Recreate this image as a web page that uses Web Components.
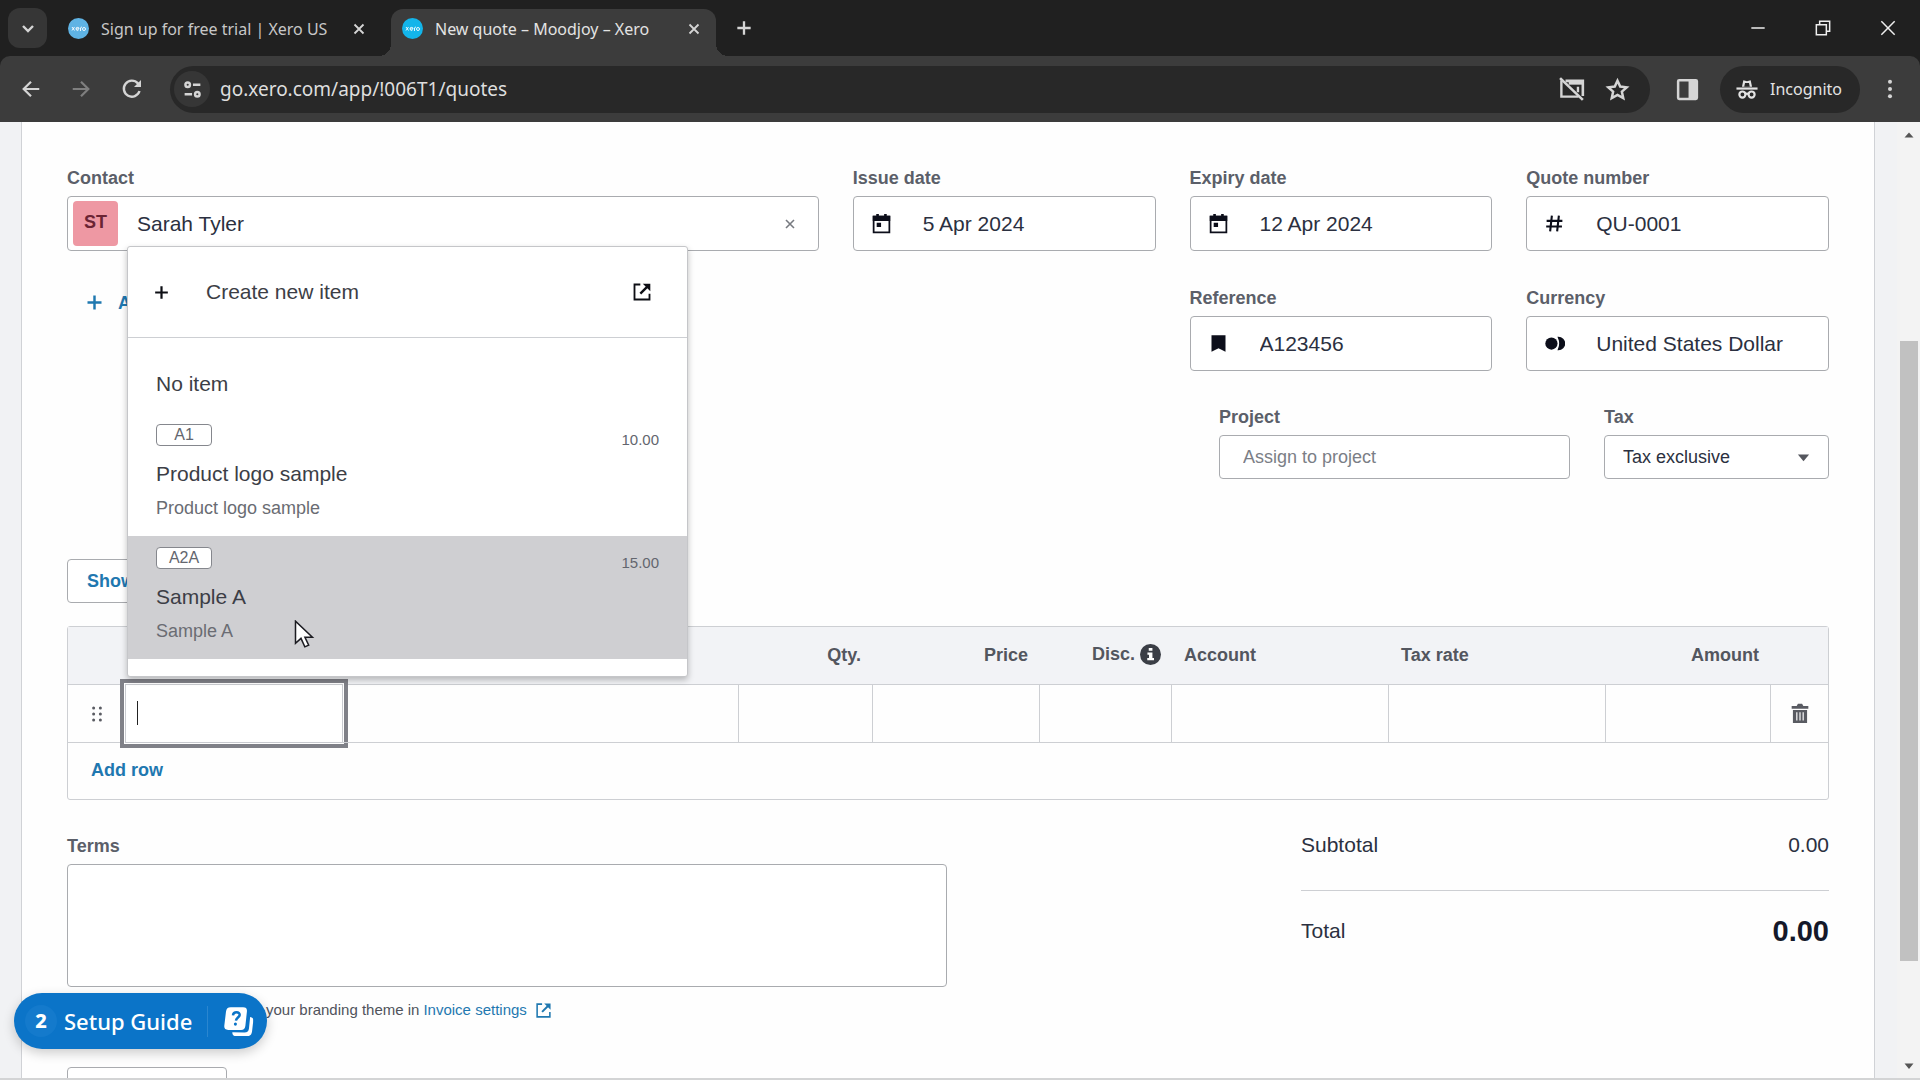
<!DOCTYPE html>
<html lang="en">
<head>
<meta charset="utf-8">
<title>New quote – Moodjoy – Xero</title>
<style>
    html, body {
        margin: 0;
        height: 100%;
        overflow: hidden;
    }

    body {
        display: flex;
        flex-direction: column;
        font-family: "Liberation Sans", Arial, sans-serif;
        font-size: 18px;
        line-height: 20px;
        color: #2b3040;
        background: #f1f2f4;
        --label: #5b5f69;
        --line: #cdcfd3;
        --field-line: #a9abaf;
        --blue: #1f78b0;
        --text: #2b3040;
    }
</style>
</head>
<body>
<browser-bar>
    <browser-tab slot="tabs" label="Sign up for free trial | Xero US"></browser-tab>
    <browser-tab slot="tabs" label="New quote – Moodjoy – Xero" active></browser-tab>
</browser-bar>
<page-view>
    <quote-form></quote-form>
    <setup-guide slot="floating" count="2"></setup-guide>
</page-view>

<script>
const ICONS = {
    chevron: '<path d="M7 10l5 5 5-5" fill="none" stroke="currentColor" stroke-width="2.4"/>',
    close: '<path d="M6 6l12 12M18 6L6 18" stroke="currentColor" stroke-width="2.4"/>',
    thinClose: '<path d="M4 4l16 16M20 4L4 20" stroke="currentColor" stroke-width="1.8"/>',
    plus: '<path d="M12 4v16M4 12h16" stroke="currentColor" stroke-width="2.8"/>',
    minimize: '<path d="M4 12h16" stroke="currentColor" stroke-width="1.8"/>',
    restore: '<path d="M4 8h12v12H4zM8 8V4h12v12h-4" fill="none" stroke="currentColor" stroke-width="1.8"/>',
    back: '<path d="M21 12H4M12 4l-8 8 8 8" fill="none" stroke="currentColor" stroke-width="2.4"/>',
    forward: '<path d="M3 12h17M12 4l8 8-8 8" fill="none" stroke="currentColor" stroke-width="2.4"/>',
    reload: '<path d="M19.5 14a8 8 0 1 1-1.6-7.6L20 8.6" fill="none" stroke="currentColor" stroke-width="2.4"/><path d="M21 3v7h-7z" fill="currentColor"/>',
    tune: '<g fill="none" stroke="currentColor" stroke-width="2.8"><circle cx="6.5" cy="6.500" r="2.6"/><path d="M12.500 6.500h8.500M3 17.500h8.500"/><circle cx="17.500" cy="17.500" r="2.6"/></g>',
    cameraOff: '<path d="M6 4.500h16v14" fill="none" stroke="currentColor" stroke-width="2.4"/><path d="M9 4h13v4H9z" fill="currentColor"/><path d="M2.200 4v15H18M17.500 10v5" fill="none" stroke="currentColor" stroke-width="2.200"/><path d="M1 2l21 20" stroke="currentColor" stroke-width="2.400"/>',
    star: '<path d="M12 3.500l2.600 5.700 6.200.700-4.600 4.200 1.300 6.100-5.500-3.100-5.500 3.100 1.300-6.100L3.200 9.900l6.200-.700z" fill="none" stroke="currentColor" stroke-width="2.4"/>',
    panel: '<rect x="3" y="3" width="18" height="18" rx="1" fill="none" stroke="currentColor" stroke-width="2.4"/><path d="M13 3h8v18h-8z" fill="currentColor"/>',
    incognito: '<path d="M6.500 9.500L8 2.500l4 1 4-1 1.500 7z" fill="currentColor"/><path d="M9.800 5.500h4.400l.800 4H9z" fill="#282828"/><path d="M.500 11.500h23" stroke="currentColor" stroke-width="2.400"/><g fill="none" stroke="currentColor" stroke-width="2.400"><circle cx="7" cy="18" r="3.300"/><circle cx="17" cy="18" r="3.300"/><path d="M10.300 17.500q1.700-1 3.400 0"/></g>',
    more: '<g fill="currentColor"><circle cx="12" cy="4" r="2.200"/><circle cx="12" cy="12" r="2.200"/><circle cx="12" cy="20" r="2.200"/></g>',
    calendar: '<path d="M3 4h18v18H3z" fill="none" stroke="currentColor" stroke-width="2"/><path d="M2 3h20v6H2zM6 1h3v4H6zM15 1h3v4h-3zM6.500 11h5v5h-5z" fill="currentColor"/>',
    hash: '<path d="M9 3L7 21M17 3l-2 18M3 9h18M2.500 15.500h18" stroke="currentColor" stroke-width="2.400"/>',
    bookmark: '<path d="M4 2.500h16v19l-8-4-8 4z" fill="currentColor"/>',
    coins: '<circle cx="8.500" cy="12" r="7" fill="currentColor"/><path d="M16.500 5a7 7 0 0 1 0 14q3.200-7 0-14z" fill="currentColor" stroke="currentColor" stroke-width="1.500"/>',
    external: '<path d="M10 3H3v18h18v-7" fill="none" stroke="currentColor" stroke-width="2.200"/><path d="M10 14L19 5" stroke="currentColor" stroke-width="2.800"/><path d="M13 2h9v9z" fill="currentColor"/>',
    grip: '<g fill="currentColor"><circle cx="7.500" cy="4" r="2"/><circle cx="7.500" cy="12" r="2"/><circle cx="7.500" cy="20" r="2"/><circle cx="16.500" cy="4" r="2"/><circle cx="16.500" cy="12" r="2"/><circle cx="16.500" cy="20" r="2"/></g>',
    trash: '<path d="M2 3.500h6L9.500 1h5L16 3.500h6V7H2zM3.500 8.500h17V24h-17z" fill="currentColor"/><path d="M8.200 11v10M12 11v10M15.800 11v10" stroke="#fff" stroke-width="1.400"/>',
    info: '<circle cx="12" cy="12" r="12" fill="#3b3e46"/><path d="M10 4.500h4.200v3.300H10zM8.500 9.700h5.700V16H16v2.500H8.300V16h2v-3.800H8.500z" fill="#fff"/>',
    caretDown: '<path d="M3 7h18l-9 11z" fill="currentColor"/>',
    caretUp: '<path d="M3 17h18L12 7z" fill="currentColor"/>',
    pointer: '<path d="M3 1v19l4.700-4.300L11 23l3.300-1.500-3.200-6.700h6.400z" fill="#fff" stroke="#1c1c22" stroke-width="1.300"/>',
    cards: '<path d="M21 8.500c2.500.500 2.500 1.500 2.300 4l-.800 7c-.400 2.800-1.500 3.800-4 3.800h-8c-2.500 0-3.300-1-3.300-3l9.300.200c2.500 0 3.300-1 3.600-3z" fill="currentColor"/><path d="M6 1h9.500c2.500 0 3.300 1.200 3 3.500l-1.200 11c-.300 2-1.300 3-3.300 3H4c-2.300 0-3.200-1.200-3-3.300L2.300 4.500C2.600 2.100 3.700 1 6 1z" fill="currentColor"/><path d="M7.700 7.200c.200-1.600 1.300-2.400 2.800-2.400 1.700 0 2.500 1 2.400 2.200-.300 1.900-2.600 2-2.900 4.300" fill="none" stroke="#0b74c8" stroke-width="1.900"/><circle cx="9.600" cy="14" r="1.200" fill="#0b74c8"/>'
};

class UiIcon extends HTMLElement {
    constructor() {
        super();
        this.attachShadow({ mode: 'open' });
    }

    connectedCallback() {
        const size = this.getAttribute('size') || 20;
        this.shadowRoot.innerHTML = `
        <style>
            :host { display: inline-flex; flex: none; vertical-align: middle; }
            svg { display: block; }
        </style>
        <svg width="${size}" height="${size}" viewBox="0 0 24 24" aria-hidden="true">${ICONS[this.getAttribute('name')] || ''}</svg>
        `;
    }
}

class BrowserTab extends HTMLElement {
    constructor() {
        super();
        this.attachShadow({ mode: 'open' });
    }

    connectedCallback() {
        const label = this.getAttribute('label');
        this.shadowRoot.innerHTML = `
        <style>
            :host {
                position: relative;
                display: flex;
                align-items: center;
                gap: 12px;
                width: 334px;
                height: 47px;
                padding: 0 23px 8px 11px;
                margin-top: 9px;
                box-sizing: border-box;
                color: #c7c7c7;
            }

            :host([active]) {
                width: 325px;
                padding-right: 13px;
                border-radius: 12px 12px 0 0;
                background: #3c3c3c;
                color: #e3e3e3;
            }

            /* curved feet of the selected tab */
            :host([active])::before,
            :host([active])::after {
                content: "";
                position: absolute;
                bottom: 0;
                width: 12px;
                height: 12px;
            }

            :host([active])::before {
                left: -12px;
                background: radial-gradient(circle at 0 0, transparent 12px, #3c3c3c 12px);
            }

            :host([active])::after {
                right: -12px;
                background: radial-gradient(circle at 100% 0, transparent 12px, #3c3c3c 12px);
            }

            .favicon {
                flex: none;
                width: 21px;
                height: 21px;
                border-radius: 50%;
                background: #5fb3e4;
            }

            :host([active]) .favicon { background: #13b5ea; }

            .label {
                flex: 1;
                font-size: 16px;
                white-space: nowrap;
            }

            button {
                display: flex;
                padding: 0;
                border: 0;
                background: none;
                color: #d5d5d5;
            }
        </style>
        <svg class="favicon" viewBox="0 0 21 21" aria-hidden="true">
            <path d="M4 9l2.500 3.500M6.500 9L4 12.500M8 11h3a1.500 1.500 0 1 0-.500 1M12.500 13v-3q.500-1 1.500-1" fill="none" stroke="#fff" stroke-width=".9"/>
            <circle cx="16" cy="11" r="1.500" fill="none" stroke="#fff" stroke-width=".9"/>
        </svg>
        <span class="label">${label}</span>
        <button aria-label="Close tab"><ui-icon name="close" size="18"></ui-icon></button>
        `;
    }
}

class BrowserBar extends HTMLElement {
    constructor() {
        super();
        this.attachShadow({ mode: 'open' });
        this.shadowRoot.innerHTML = `
        <style>
            :host {
                display: block;
                flex: none;
                background: #202020;
                color: #d5d5d5;
                font-family: "Noto Sans", "Open Sans", sans-serif;
            }

            button {
                display: flex;
                align-items: center;
                justify-content: center;
                padding: 0;
                border: 0;
                background: none;
                color: inherit;
                font: inherit;
            }

            .strip {
                display: flex;
                height: 56px;
                padding: 0 22px 0 8px;
            }

            .tabs {
                display: flex;
                flex: 1;
                padding-left: 10px;
            }

            .search {
                width: 39px;
                height: 40px;
                margin-top: 8px;
                border-radius: 12px;
                background: #363636;
            }

            .new-tab {
                width: 30px;
                margin-left: 13px;
            }

            .window {
                display: flex;
                gap: 45px;
                color: #eee;
            }

            .toolbar {
                display: flex;
                align-items: center;
                height: 66px;
                padding: 0 19px 0 18px;
                background: #3c3c3c;
                border-radius: 10px 10px 0 0;
            }

            .nav {
                display: flex;
                gap: 28px;
                padding-left: 2px;
                padding-right: 26px;
            }

            .nav .off { color: #7f7f7f; }

            .address {
                display: flex;
                flex: 1;
                align-items: center;
                gap: 20px;
                height: 47px;
                padding: 0 20px 0 4px;
                border-radius: 24px;
                background: #282828;
            }

            .site {
                width: 36px;
                height: 36px;
                border-radius: 50%;
                background: #363636;
            }

            input {
                flex: 1;
                min-width: 0;
                height: 32px;
                padding: 0;
                margin-left: -10px;
                border: 0;
                outline: 0;
                background: none;
                color: #dedede;
                font: inherit;
                font-size: 19px;
            }

            .panel { margin: 0 20px 0 25px; }

            .incognito {
                gap: 12px;
                height: 47px;
                padding: 0 18px 0 16px;
                margin-right: 19px;
                border-radius: 24px;
                background: #282828;
                color: #e3e3e3;
                font-size: 16px;
            }
        </style>
        <div class="strip">
            <button class="search" aria-label="Search tabs"><ui-icon name="chevron" size="24"></ui-icon></button>
            <div class="tabs">
                <slot name="tabs"></slot>
                <button class="new-tab" aria-label="New tab"><ui-icon name="plus" size="20"></ui-icon></button>
            </div>
            <div class="window">
                <button aria-label="Minimize"><ui-icon name="minimize" size="20"></ui-icon></button>
                <button aria-label="Restore"><ui-icon name="restore" size="20"></ui-icon></button>
                <button aria-label="Close"><ui-icon name="thinClose" size="20"></ui-icon></button>
            </div>
        </div>
        <div class="toolbar">
            <div class="nav">
                <button aria-label="Back"><ui-icon name="back" size="22"></ui-icon></button>
                <button class="off" aria-label="Forward"><ui-icon name="forward" size="22"></ui-icon></button>
                <button aria-label="Reload"><ui-icon name="reload" size="24"></ui-icon></button>
            </div>
            <div class="address">
                <button class="site" aria-label="View site information"><ui-icon name="tune" size="21"></ui-icon></button>
                <input aria-label="Address" value="go.xero.com/app/!006T1/quotes">
                <button aria-label="Camera blocked"><ui-icon name="cameraOff" size="26"></ui-icon></button>
                <button aria-label="Bookmark this page"><ui-icon name="star" size="25"></ui-icon></button>
            </div>
            <button class="panel" aria-label="Side panel"><ui-icon name="panel" size="25"></ui-icon></button>
            <button class="incognito"><ui-icon name="incognito" size="22"></ui-icon>Incognito</button>
            <button aria-label="Menu"><ui-icon name="more" size="22"></ui-icon></button>
        </div>
        `;
    }
}

class PageView extends HTMLElement {
    constructor() {
        super();
        this.attachShadow({ mode: 'open' });
        this.shadowRoot.innerHTML = `
        <style>
            :host {
                position: relative;
                display: flex;
                flex: 1;
                min-height: 0;
                padding-left: 21px;
                overflow: hidden;
            }

            main {
                flex: 1;
                margin-right: 22px;
                border: 1px solid #d0d2d6;
                border-width: 0 1px;
                background: #fefefe;
            }

            .scrollbar {
                display: flex;
                flex-direction: column;
                align-items: center;
                width: 23px;
                padding: 7px 0 8px;
                box-sizing: border-box;
                background: #f3f3f3;
                color: #555;
            }

            .track {
                display: flex;
                flex: 1;
                flex-direction: column;
                margin: 4px 0;
            }

            .before { flex: 196; }

            .thumb {
                flex: 621;
                width: 18px;
                background: #c1c1c1;
            }

            .after { flex: 95; }

            .edge {
                position: absolute;
                left: 0;
                right: 0;
                bottom: 0;
                height: 2px;
                background: #d3d4d5;
            }
        </style>
        <main><slot></slot></main>
        <div class="scrollbar">
            <ui-icon name="caretUp" size="12"></ui-icon>
            <div class="track"><div class="before"></div><div class="thumb"></div><div class="after"></div></div>
            <ui-icon name="caretDown" size="12"></ui-icon>
        </div>
        <div class="edge"></div>
        <slot name="floating"></slot>
        `;
    }
}

// Labelled text box, with an icon or a slotted lead at its left
class QuoteField extends HTMLElement {
    constructor() {
        super();
        this.attachShadow({ mode: 'open' });
    }

    connectedCallback() {
        const icon = this.getAttribute('icon');
        const clear = this.hasAttribute('clearable')
            ? '<button aria-label="Clear"><ui-icon name="close" size="16"></ui-icon></button>'
            : '';

        this.shadowRoot.innerHTML = `
        <style>
            :host { display: block; }

            label {
                display: block;
                margin-bottom: 8px;
                color: var(--label);
                font-weight: bold;
            }

            .box {
                display: flex;
                align-items: center;
                height: 55px;
                padding: 0 5px;
                box-sizing: border-box;
                border: 1px solid var(--field-line);
                border-radius: 4px;
                background: #fff;
            }

            .lead {
                display: flex;
                justify-content: center;
                width: 45px;
                margin-right: 19px;
                color: #0c0e1a;
            }

            input {
                flex: 1;
                min-width: 0;
                padding: 0;
                border: 0;
                outline: 0;
                background: none;
                color: var(--text);
                font: inherit;
                font-size: 21px;
            }

            input::placeholder { color: #7b7e86; }

            button {
                display: flex;
                padding: 0 15px;
                border: 0;
                background: none;
                color: #777a80;
            }

            :host([compact]) .box {
                height: 44px;
                padding: 0 23px;
            }

            :host([compact]) .lead { display: none; }
            :host([compact]) input { font-size: 18px; }
        </style>
        <label for="field">${this.getAttribute('label')}</label>
        <div class="box">
            <div class="lead"><slot name="lead">${icon ? `<ui-icon name="${icon}" size="21"></ui-icon>` : ''}</slot></div>
            <input id="field" value="${this.getAttribute('value') || ''}" placeholder="${this.getAttribute('placeholder') || ''}">
            ${clear}
        </div>
        `;
    }
}

class ItemOption extends HTMLElement {
    constructor() {
        super();
        this.attachShadow({ mode: 'open' });
    }

    connectedCallback() {
        this.shadowRoot.innerHTML = `
        <style>
            :host {
                position: relative;
                display: grid;
                grid-template-columns: 1fr auto;
                height: 123px;
                padding: 11px 28px 0;
                box-sizing: border-box;
                align-content: start;
            }

            :host([selected]) { background: #cfcfd2; }

            .code {
                justify-self: start;
                width: 56px;
                height: 22px;
                box-sizing: border-box;
                border: 1px solid #85878d;
                border-radius: 4px;
                background: #fff;
                color: #63666e;
                font-size: 16px;
                line-height: 20px;
                text-align: center;
            }

            .price {
                padding-top: 6px;
                color: #63666e;
                font-size: 15px;
            }

            .name, .description { grid-column: 1 / -1; }

            .name {
                margin-top: 6px;
                font-size: 21px;
                line-height: 36px;
            }

            .description {
                color: #6a6c73;
                line-height: 32px;
            }

            ::slotted(*) {
                position: absolute;
                left: 164px;
                top: 84px;
            }
        </style>
        <span class="code">${this.getAttribute('code')}</span>
        <span class="price">${this.getAttribute('price')}</span>
        <span class="name">${this.getAttribute('name')}</span>
        <span class="description">${this.getAttribute('description')}</span>
        <slot></slot>
        `;
    }
}

class ItemPicker extends HTMLElement {
    constructor() {
        super();
        this.attachShadow({ mode: 'open' });
        this.shadowRoot.innerHTML = `
        <style>
            :host {
                display: block;
                width: 561px;
                border: 1px solid #c5c6c9;
                border-radius: 3px;
                box-sizing: border-box;
                background: #fff;
                box-shadow: 0 3px 6px rgba(0, 0, 0, .25);
                font-weight: normal;
                color: #3c3e46;
            }

            .create {
                display: flex;
                align-items: center;
                width: 100%;
                height: 91px;
                padding: 0 35px 0 24px;
                border: 0;
                border-bottom: 1px solid var(--line);
                background: none;
                color: inherit;
                font: inherit;
                font-size: 21px;
            }

            .create span {
                flex: 1;
                padding-left: 35px;
                text-align: left;
            }

            ui-icon { color: #0d0e14; }

            .list { padding: 17px 0; }

            .none {
                padding: 0 28px;
                font-size: 21px;
                line-height: 58px;
            }
        </style>
        <button class="create">
            <ui-icon name="plus" size="19"></ui-icon>
            <span>Create new item</span>
            <ui-icon name="external" size="20"></ui-icon>
        </button>
        <div class="list">
            <div class="none">No item</div>
            <item-option code="A1" price="10.00" name="Product logo sample" description="Product logo sample"></item-option>
            <item-option code="A2A" price="15.00" name="Sample A" description="Sample A" selected>
                <ui-icon name="pointer" size="28"></ui-icon>
            </item-option>
        </div>
        `;
    }
}

class LineItems extends HTMLElement {
    constructor() {
        super();
        this.attachShadow({ mode: 'open' });
        this.shadowRoot.innerHTML = `
        <style>
            :host {
                display: block;
                border: 1px solid var(--line);
                border-radius: 3px;
            }

            table {
                width: 100%;
                table-layout: fixed;
                border-collapse: separate;
                border-spacing: 0;
            }

            th {
                height: 55px;
                padding: 0 12px 2px;
                border-bottom: 1px solid var(--line);
                background: #f2f3f6;
                color: #53565f;
                text-align: left;
            }

            th.number { text-align: right; }
            th.disc { padding-right: 11px; white-space: nowrap; }

            td {
                position: relative;
                height: 57px;
                padding: 0;
                border-right: 1px solid var(--line);
                border-bottom: 1px solid var(--line);
            }

            td.plain { border-right: 0; }

            input {
                display: block;
                width: 100%;
                height: 57px;
                padding: 0 12px;
                box-sizing: border-box;
                border: 0;
                outline: 0;
                background: none;
                font: inherit;
            }

            td.editing input {
                background: #fff;
                box-shadow: 0 0 0 1px #c9cbd0, 0 0 0 2px #fff;
                outline: 4px solid #808188;
                outline-offset: 2px;
            }

            .caret {
                position: absolute;
                left: 11px;
                top: 16px;
                width: 1px;
                height: 24px;
                background: #222;
            }

            item-picker {
                position: absolute;
                left: 1px;
                bottom: 65px;
                z-index: 2;
            }

            button {
                border: 0;
                background: none;
                font: inherit;
            }

            td button {
                display: block;
                width: 100%;
                padding: 0 0 2px;
                color: #595b62;
            }

            .foot {
                display: flex;
                align-items: center;
                height: 54px;
                padding: 0 23px 2px;
            }

            .foot button {
                padding: 0;
                color: var(--blue);
                font-weight: bold;
            }

            .c-grip { width: 58px; }
            .c-item { width: 216px; }
            .c-qty { width: 134px; }
            .c-price { width: 167px; }
            .c-disc { width: 132px; }
            .c-wide { width: 217px; }
            .c-amount { width: 165px; }
            .c-bin { width: 57px; }
        </style>
        <table>
            <colgroup>
                <col class="c-grip"><col class="c-item"><col><col class="c-qty"><col class="c-price">
                <col class="c-disc"><col class="c-wide"><col class="c-wide"><col class="c-amount"><col class="c-bin">
            </colgroup>
            <thead>
                <tr>
                    <th></th><th></th><th></th>
                    <th class="number">Qty.</th>
                    <th class="number">Price</th>
                    <th class="number disc">Disc. <ui-icon name="info" size="21"></ui-icon></th>
                    <th>Account</th>
                    <th>Tax rate</th>
                    <th class="number">Amount</th>
                    <th></th>
                </tr>
            </thead>
            <tbody>
                <tr>
                    <td class="plain"><button aria-label="Move row"><ui-icon name="grip" size="18"></ui-icon></button></td>
                    <td class="plain editing">
                        <input aria-label="Item">
                        <span class="caret"></span>
                        <item-picker></item-picker>
                    </td>
                    <td><input aria-label="Description"></td>
                    <td><input aria-label="Qty."></td>
                    <td><input aria-label="Price"></td>
                    <td><input aria-label="Disc."></td>
                    <td><input aria-label="Account"></td>
                    <td><input aria-label="Tax rate"></td>
                    <td><input aria-label="Amount"></td>
                    <td class="plain"><button aria-label="Delete row"><ui-icon name="trash" size="20"></ui-icon></button></td>
                </tr>
            </tbody>
        </table>
        <div class="foot"><button>Add row</button></div>
        `;
    }
}

class QuoteTotals extends HTMLElement {
    constructor() {
        super();
        this.attachShadow({ mode: 'open' });
        this.shadowRoot.innerHTML = `
        <style>
            :host {
                display: block;
                font-size: 21px;
            }

            dl { margin: 0; }

            div {
                display: flex;
                align-items: center;
                justify-content: space-between;
                height: 18px;
            }

            dd { margin: 0; }

            .subtotal { padding-bottom: 36px; border-bottom: 1px solid var(--line); }
            .total { padding-top: 31px; }

            .total dd {
                color: #14182a;
                font-size: 29px;
                font-weight: bold;
            }
        </style>
        <dl>
            <div class="subtotal"><dt>Subtotal</dt><dd>0.00</dd></div>
            <div class="total"><dt>Total</dt><dd>0.00</dd></div>
        </dl>
        `;
    }
}

class QuoteForm extends HTMLElement {
    constructor() {
        super();
        this.attachShadow({ mode: 'open' });
        this.shadowRoot.innerHTML = `
        <style>
            :host {
                display: block;
                padding: 46px 45px 0;
            }

            .fields {
                display: grid;
                grid-template-columns: repeat(16, 1fr);
                gap: 37px 34px;
            }

            .contact { grid-column: span 7; }
            .third { grid-column: span 3; }

            .add {
                grid-column: span 10;
                align-self: start;
                justify-self: start;
                display: flex;
                align-items: center;
                gap: 13px;
                padding: 4px 17px;
                border: 0;
                background: none;
                color: var(--blue);
                font: inherit;
                font-weight: bold;
            }

            .avatar {
                width: 45px;
                height: 45px;
                border-radius: 4px;
                background: #ee98a3;
                color: #6b2434;
                font-weight: bold;
                line-height: 43px;
                text-align: center;
            }

            .options {
                display: flex;
                justify-content: flex-end;
                gap: 34px;
                margin-top: 36px;
            }

            .options quote-field { width: 351px; }
            .tax { width: 225px; }

            label {
                display: block;
                margin-bottom: 8px;
                color: var(--label);
                font-weight: bold;
            }

            .select {
                position: relative;
            }

            select {
                appearance: none;
                width: 100%;
                height: 44px;
                padding: 0 18px;
                border: 1px solid var(--field-line);
                border-radius: 4px;
                background: #fff;
                color: var(--text);
                font: inherit;
            }

            .select ui-icon {
                position: absolute;
                right: 18px;
                top: 15px;
                color: #55575e;
                pointer-events: none;
            }

            .outline {
                display: block;
                width: 160px;
                height: 44px;
                padding: 0 19px;
                border: 1px solid var(--field-line);
                border-radius: 4px;
                background: #fff;
                color: var(--blue);
                font: inherit;
                font-weight: bold;
                text-align: left;
            }

            .show { margin: 80px 0 23px; }

            .bottom {
                display: flex;
                justify-content: space-between;
                align-items: flex-start;
                margin-top: 36px;
            }

            .terms { flex: 0 1 880px; }
            quote-totals { flex: 0 1 528px; }

            textarea {
                display: block;
                width: 100%;
                height: 123px;
                padding: 12px;
                box-sizing: border-box;
                border: 1px solid var(--field-line);
                border-radius: 4px;
                resize: none;
                outline: 0;
                font: inherit;
            }

            p {
                display: flex;
                align-items: center;
                gap: 4px;
                margin: 13px 0 47px;
                padding-left: 199px;
                color: #50535c;
                font-size: 15px;
            }

            a {
                display: inline-flex;
                align-items: center;
                gap: 8px;
                color: var(--blue);
                text-decoration: none;
            }
        </style>
        <div class="fields">
            <quote-field class="contact" label="Contact" value="Sarah Tyler" clearable>
                <div slot="lead" class="avatar">ST</div>
            </quote-field>
            <quote-field class="third" label="Issue date" icon="calendar" value="5 Apr 2024"></quote-field>
            <quote-field class="third" label="Expiry date" icon="calendar" value="12 Apr 2024"></quote-field>
            <quote-field class="third" label="Quote number" icon="hash" value="QU-0001"></quote-field>
            <button class="add"><ui-icon name="plus" size="21"></ui-icon>Add</button>
            <quote-field class="third" label="Reference" icon="bookmark" value="A123456"></quote-field>
            <quote-field class="third" label="Currency" icon="coins" value="United States Dollar"></quote-field>
        </div>
        <div class="options">
            <quote-field label="Project" placeholder="Assign to project" compact></quote-field>
            <div class="tax">
                <label for="tax">Tax</label>
                <div class="select">
                    <select id="tax"><option>Tax exclusive</option></select>
                    <ui-icon name="caretDown" size="15"></ui-icon>
                </div>
            </div>
        </div>
        <button class="outline show">Show</button>
        <line-items></line-items>
        <div class="bottom">
            <div class="terms">
                <label for="terms">Terms</label>
                <textarea id="terms"></textarea>
                <p>your branding theme in <a href="#">Invoice settings <ui-icon name="external" size="17"></ui-icon></a></p>
                <button class="outline" aria-label="Attach files"></button>
            </div>
            <quote-totals></quote-totals>
        </div>
        `;
    }
}

class SetupGuide extends HTMLElement {
    constructor() {
        super();
        this.attachShadow({ mode: 'open' });
    }

    connectedCallback() {
        this.shadowRoot.innerHTML = `
        <style>
            :host {
                position: absolute;
                left: 14px;
                bottom: 31px;
            }

            button {
                display: flex;
                align-items: center;
                height: 56px;
                padding: 0 13px 0 11px;
                border: 0;
                border-radius: 28px;
                background: #0b74c8;
                box-shadow: 0 4px 12px rgba(0, 0, 0, .2);
                color: #fff;
                font-family: "Noto Sans", "Open Sans", sans-serif;
                font-size: 22px;
                font-weight: 500;
            }

            .count {
                width: 32px;
                border-radius: 50%;
                background: #147acc;
                font-size: 20px;
                font-weight: 800;
                line-height: 32px;
            }

            .label { padding: 0 15px 0 7px; }

            ui-icon {
                padding-left: 15px;
                border-left: 1px solid #2a86d0;
            }
        </style>
        <button>
            <span class="count">${this.getAttribute('count')}</span>
            <span class="label">Setup Guide</span>
            <ui-icon name="cards" size="31"></ui-icon>
        </button>
        `;
    }
}

customElements.define('ui-icon', UiIcon);
customElements.define('browser-tab', BrowserTab);
customElements.define('browser-bar', BrowserBar);
customElements.define('page-view', PageView);
customElements.define('quote-field', QuoteField);
customElements.define('item-option', ItemOption);
customElements.define('item-picker', ItemPicker);
customElements.define('line-items', LineItems);
customElements.define('quote-totals', QuoteTotals);
customElements.define('quote-form', QuoteForm);
customElements.define('setup-guide', SetupGuide);
</script>
</body>
</html>
